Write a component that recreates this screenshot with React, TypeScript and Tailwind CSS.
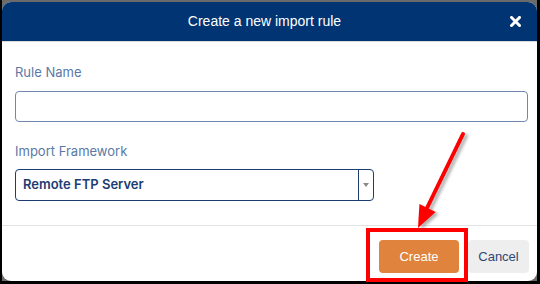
import React from "react";

export default function App() {
  return (
    <div className="relative w-[540px] h-[284px] bg-black pl-[2px] pr-[3px] pb-[3px] overflow-hidden">
      <div className="h-full bg-[#6b6b6b] pt-[2px]">
        <div className="h-full flex flex-col bg-white rounded-[9px] overflow-hidden">
          {/* header */}
          <div className="h-[39px] shrink-0 bg-[#003473] flex items-center border-b border-[#d9d9d9] box-content">
            <div className="flex-1 text-center pl-[24px] text-white text-[14px] font-['Liberation_Sans',Arial,sans-serif]">
              Create a new import rule
            </div>
            <div className="w-[24px] mr-[10px] flex justify-center">
              <svg width="11" height="11" viewBox="0 0 11 11">
                <path d="M1.5 1.5 L9.5 9.5 M9.5 1.5 L1.5 9.5" stroke="#fff" strokeWidth="3" strokeLinecap="square" />
              </svg>
            </div>
          </div>

          {/* body */}
          <div className="flex-1 px-[13px] pt-[21px] font-['Inter',sans-serif]">
            <div className="text-[13px] leading-[18px] text-[#5a79a5]">Rule Name</div>
            <div className="mt-[10px] h-[31px] w-[513px] rounded-[4px] border border-[#7088ae]" />
            <div className="mt-[20px] text-[13px] leading-[18px] text-[#5a79a5]">Import Framework</div>
            <div className="mt-[9px] h-[32px] w-[359px] rounded-[4px] border border-[#1d3c72] flex">
              <div className="flex-1 flex items-center pl-[7px] text-[13px] font-semibold text-[#1d3c72]">
                Remote FTP Server
              </div>
              <div className="w-[15px] border-l border-[#1d3c72] flex items-center justify-center">
                <svg width="6" height="4" viewBox="0 0 6 4">
                  <path d="M0 0 L6 0 L3 4 Z" fill="#8a8a8a" />
                </svg>
              </div>
            </div>
          </div>

          {/* footer */}
          <div className="h-[56px] shrink-0 border-t border-[#e2e2e2] flex justify-end items-start pt-[14px] pr-[8px] gap-[9px] font-['Liberation_Sans',Arial,sans-serif]">
            <button className="w-[80px] h-[33px] rounded-[4px] bg-[#e0833d] text-white text-[13px]">Create</button>
            <button className="w-[61px] h-[33px] rounded-[4px] bg-[#eeeeee] text-[#2f4775] text-[13px]">Cancel</button>
          </div>
        </div>
      </div>

      {/* annotation: red box */}
      <div className="absolute left-[366px] top-[228px] w-[102px] h-[54px] border-[4px] border-[#ff0000]" />

      {/* annotation: arrow */}
      <svg className="absolute inset-0 pointer-events-none" width="540" height="284" viewBox="0 0 540 284">
        <defs>
          <filter id="sh" x="-50%" y="-50%" width="200%" height="200%">
            <feGaussianBlur stdDeviation="1.5" />
          </filter>
        </defs>
        <g transform="translate(3,2)" filter="url(#sh)" opacity="0.45">
          <path d="M463 134 L427 208" stroke="#555" strokeWidth="4" strokeLinecap="round" />
          <path d="M418 228 L419.4 204 L435.6 212 Z" fill="#555" />
        </g>
        <path d="M463 134 L427 208" stroke="#ff0000" strokeWidth="4" strokeLinecap="round" />
        <path d="M418 228 L419.4 204 L435.6 212 Z" fill="#ff0000" />
      </svg>
    </div>
  );
}
